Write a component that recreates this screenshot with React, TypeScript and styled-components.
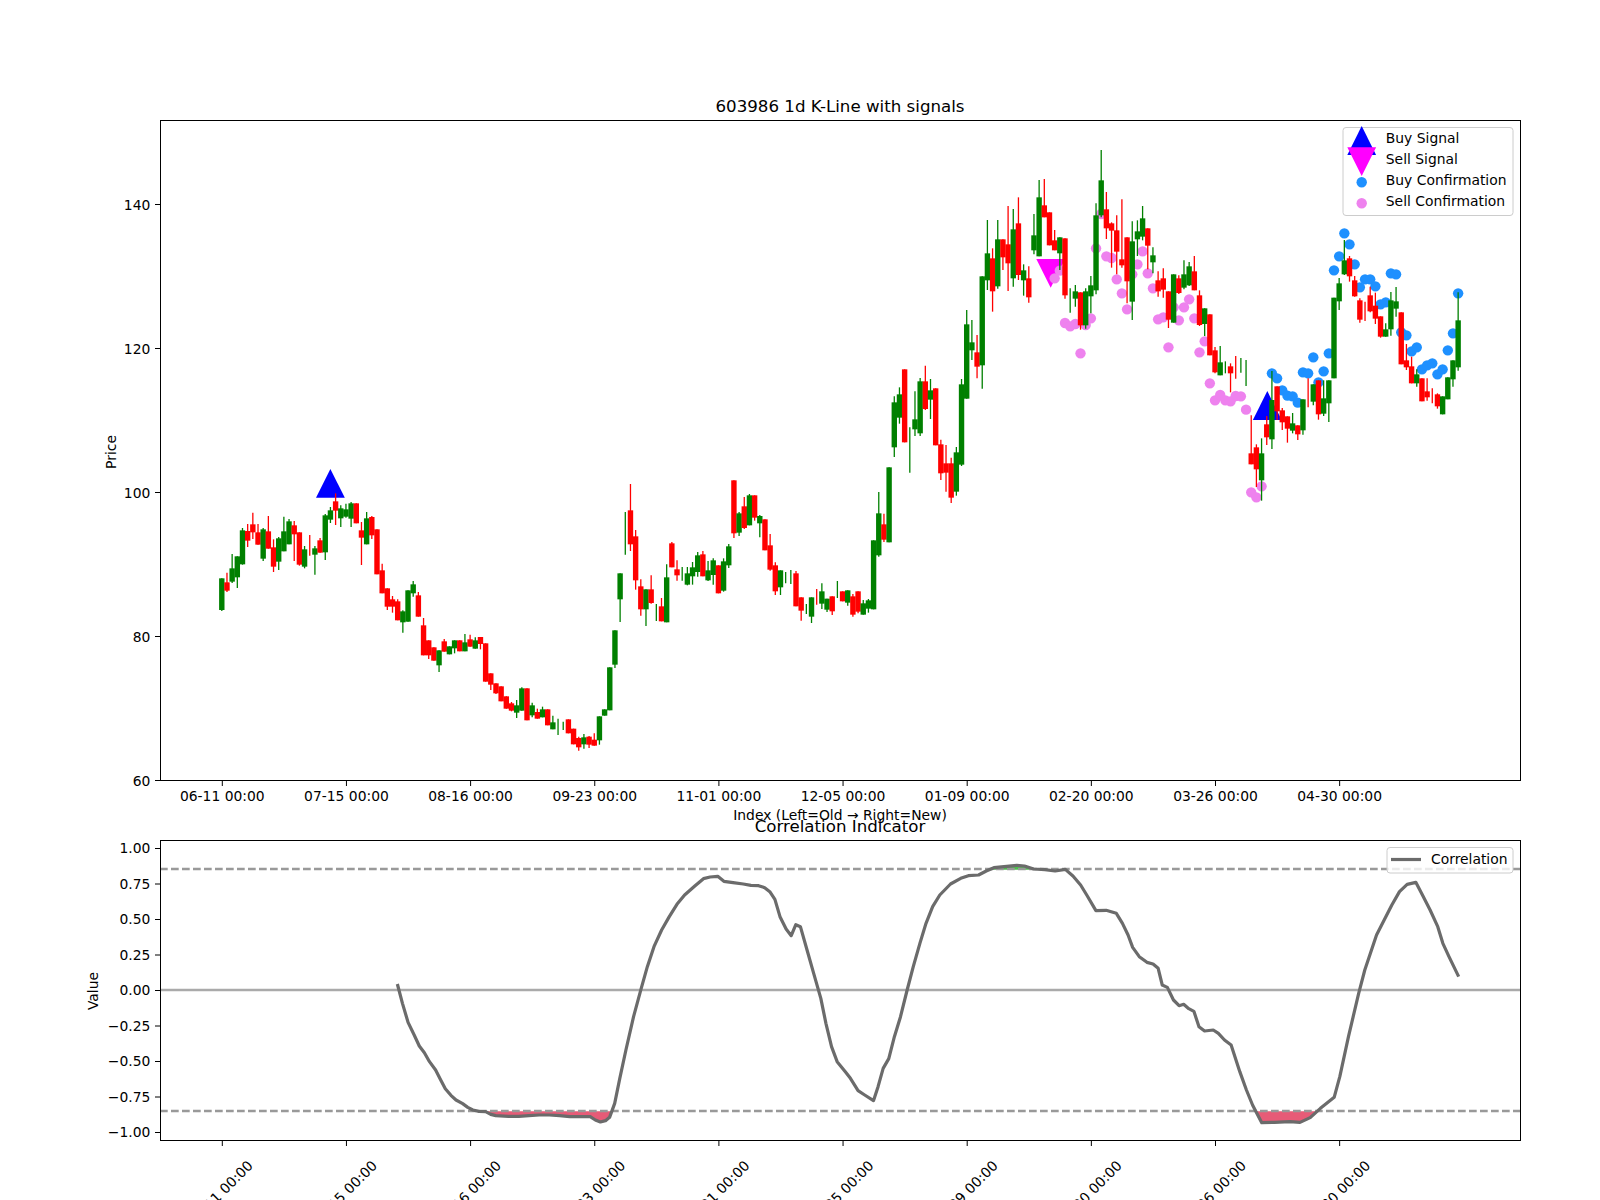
import React from "react";
import styled, { createGlobalStyle } from "styled-components";

const GlobalStyle = createGlobalStyle`
  html, body { margin: 0; padding: 0; background: #fff; }
`;

const Figure = styled.main`
  box-sizing: border-box;
  width: 1600px;
  height: 1200px;
  padding: 120px 80px 0 160px;
  display: flex;
  flex-direction: column;
  gap: 60px;
  overflow: hidden;
  background: #fff;
`;
const ChartBox = styled.section<{ $h: number }>`
  height: ${(p) => p.$h}px;
  flex: none;
`;
const ChartSvg = styled.svg`
  display: block;
  width: 100%;
  height: 100%;
  overflow: visible;
`;
const Label = styled.text<{ $anchor?: string }>`
  font-family: "DejaVu Sans", sans-serif;
  font-size: 13.89px;
  fill: #000;
  text-anchor: ${(p) => p.$anchor || "start"};
`;
const Title = styled.text`
  font-family: "DejaVu Sans", sans-serif;
  font-size: 16.67px;
  fill: #000;
  text-anchor: middle;
`;
const Spine = styled.rect`
  fill: none;
  stroke: #000;
  stroke-width: 1;
`;
const Tick = styled.line`
  stroke: #000;
  stroke-width: 1;
`;
const LegendFrame = styled.rect`
  fill: #fff;
  fill-opacity: 0.8;
  stroke: #ccc;
  stroke-width: 1;
`;
const Wick = styled.line<{ $c: string }>`
  stroke: ${(p) => p.$c};
  stroke-width: 1.3;
`;
const Body = styled.rect<{ $c: string }>`
  fill: ${(p) => p.$c};
`;
const Dot = styled.circle<{ $c: string }>`
  fill: ${(p) => p.$c};
`;
const Marker = styled.polygon<{ $c: string }>`
  fill: ${(p) => p.$c};
`;
const DashLine = styled.line`
  stroke: #999;
  stroke-width: 2.6;
  stroke-dasharray: 7.7 3.3;
`;
const ZeroLine = styled.line`
  stroke: #aaa;
  stroke-width: 2.6;
`;
const CorrLine = styled.polyline`
  fill: none;
  stroke: #6b6b6b;
  stroke-width: 3.2;
  stroke-linejoin: round;
`;
const LegendLine = styled.line`
  stroke: #6b6b6b;
  stroke-width: 3.2;
`;
const FillArea = styled.polygon<{ $c: string }>`
  fill: ${(p) => p.$c};
`;

const g = 0;
const r = 1;
type C = [number, number, number, number, number];

const Z1: C[] = [[g,535,630,535,633],[r,547,572,518,576],[g,505,545,462,549],[g,469,532,469,564],[g,391,493,384,494],[r,393,422,372,441],[r,373,397,338,417],[r,397,434,372,434],[g,388,476,384,483],[r,394,446,348,446],[r,442,500,418,516],[g,415,485,411,510],[g,394,454,350,454],[g,364,433,357,433],[r,376,403,363,483],[r,397,494,397,497],[g,448,500,438,505],[r,0,0,405,467],[g,445,464,438,524],[r,421,458,414,458],[g,346,457,342,480],[g,331,359,321,369],[r,304,332,280,375],[g,325,355,316,381],[g,328,350,311,353],[g,310,356,306,381],[r,310,370,310,370],[r,391,413,366,495],[g,355,433,336,433],[r,351,406,348,417],[r,388,523,388,523],[r,511,580,491,580],[r,565,620,565,630],[r,598,620,588,638],[r,604,661,598,661],[g,634,667,631,698],[g,571,665,571,665],[g,553,580,543,590],[r,586,650,576,650],[r,676,766,654,766],[r,721,766,721,777],[r,742,782,742,782],[g,751,796,751,816],[r,724,755,717,755],[g,739,763,739,763],[g,721,745,721,760],[r,721,754,721,754],[g,727,754,702,754],[r,718,740,704,740],[g,721,746,712,746]];

const Z2: C[] = [[r,561,582,561,598],[r,580,695,580,695],[r,670,704,670,720],[r,700,730,700,732],[r,709,754,709,754],[r,739,776,739,776],[r,760,782,756,784],[g,766,788,750,804],[g,715,782,712,782],[r,715,811,715,811],[g,766,796,758,802],[r,786,806,776,806],[g,778,802,770,802],[r,778,826,778,826],[g,817,838,797,838],[g,0,0,806,855],[g,0,0,815,840],[r,808,850,808,850],[r,836,883,836,883],[r,864,892,860,902],[g,862,883,852,896],[r,860,884,858,894],[r,869,887,850,887],[g,799,871,799,884],[g,778,797,778,797],[g,652,781,652,781],[g,541,644,541,654],[g,370,448,370,516],[g,0,0,186,314],[r,181,283,102,303],[r,259,391,240,419],[r,409,478,388,497],[g,418,478,418,528],[r,418,459,376,461],[g,0,0,462,513],[r,469,514,444,514],[g,382,517,343,517],[r,280,352,276,352],[r,358,376,331,392],[g,0,0,351,392],[g,370,404,351,406],[g,352,379,336,404],[g,316,366,306,380],[r,313,379,303,379],[g,361,391,333,393],[g,331,375,325,404],[r,346,430,346,430],[g,334,422,325,425],[g,289,346,282,354],[r,91,250,91,264],[g,190,248,186,258],[r,169,234,141,237],[g,136,226,132,226],[r,136,203,136,212],[g,198,220,195,262],[r,208,301,208,301],[r,286,359,252,362],[r,346,424,337,435],[g,361,412,361,435],[g,0,0,366,400],[g,0,0,360,402],[r,370,469,363,469]];

const Z3: C[] = [[r,742,782,742,812],[g,0,0,762,792],[g,742,800,742,819],[r,0,0,717,764],[g,724,761,700,777],[g,746,779,746,786],[r,739,784,739,795],[g,0,0,693,744],[r,724,754,724,754],[g,721,758,721,767],[r,739,794,732,800],[r,724,785,724,790],[g,760,794,750,794],[g,751,776,747,788],[g,571,778,571,778],[g,490,616,426,620],[r,523,569,491,576],[g,352,577,352,577],[g,157,292,139,321],[g,133,203,112,221],[r,58,277,58,277],[g,0,0,232,368],[g,208,238,124,258],[g,94,250,84,258],[r,94,177,47,180],[g,121,149,87,207],[r,115,286,115,286],[r,283,370,269,390],[r,340,368,285,425],[r,340,443,323,459],[g,307,425,291,437],[g,103,344,87,348]];

const Z10: C[] = [[g,463,686,420,686],[g,517,541,450,570],[r,547,590,495,625],[g,319,586,319,656],[g,250,331,150,360],[r,265,364,235,425],[g,208,349,150,356]];

const Z4: C[] = [[r,298,352,298,390],[r,313,370,198,453],[g,268,415,207,440],[r,250,405,172,420],[g,391,421,373,467],[r,415,472,379,488],[g,286,331,222,343],[g,172,349,120,349],[r,196,232,117,232],[r,217,316,217,316],[r,301,331,270,331],[g,292,340,292,390],[r,295,466,295,476],[g,0,0,445,518],[g,454,476,435,500],[r,457,556,457,569],[g,454,556,445,566],[g,436,469,408,520],[g,226,451,190,463],[g,121,226,30,232],[r,208,265,156,297],[r,250,272,247,383],[r,271,335,226,403],[r,358,376,178,383],[r,292,424,292,490],[g,304,485,244,540],[g,274,298,241,348],[g,235,290,198,301],[r,265,317,265,388],[g,346,367,322,400],[r,421,454,394,470],[r,415,449,385,473],[r,454,539,454,564],[g,403,548,403,548],[r,415,459,406,462],[g,403,443,361,448],[g,379,436,366,438],[r,394,451,348,451]];

const Z5: C[] = [[r,196,285,181,288],[g,235,282,235,318],[r,253,376,253,376],[r,361,427,351,430],[g,397,436,348,436],[g,0,0,394,430],[r,409,430,400,487],[r,0,0,378,446],[g,0,0,384,428],[g,0,0,390,468],[r,670,703,556,703],[r,652,718,643,771],[g,670,751,625,812],[r,583,622,558,645],[g,510,628,423,657],[r,469,544,469,570],[r,541,577,534,600],[r,559,596,559,638],[g,580,602,549,610],[r,586,613,586,630],[g,508,601,508,614]];

const Z6: C[] = [[r,0,0,775,862],[g,793,845,793,856],[r,781,883,781,899],[g,835,881,781,888],[g,781,850,781,906],[g,533,775,533,775],[g,490,544,474,570],[g,421,463,360,465],[r,415,469,408,485],[r,481,529,468,530],[r,541,599,535,608],[r,0,0,545,603],[r,526,574,500,577],[r,557,596,518,612],[r,589,650,589,653],[g,628,650,610,650],[g,541,628,516,647],[g,544,566,501,590],[r,577,733,577,733],[r,721,742,672,750],[r,739,790,710,790],[g,763,790,748,800],[r,775,844,775,844],[r,814,832,775,842],[r,0,0,805,850],[r,823,859,820,866],[g,829,883,829,883],[g,772,838,772,838],[g,721,778,721,800],[g,601,742,517,752]];

const X = (i: number) => 221.8 + 5.173 * i;
const conv = (rows: C[], off: number) =>
  rows.map(([c, t, b, wt, wb]) => ({
    c: c === g ? "#008000" : "#ff0000",
    t: off + t / 3,
    b: off + b / 3,
    wt: off + wt / 3,
    wb: off + wb / 3,
    body: !(t === 0 && b === 0),
  }));
const candles = [
  ...conv(Z1, 400),
  ...conv(Z2, 450),
  ...conv(Z3, 350),
  ...conv(Z10, 170),
  ...conv(Z4, 140),
  ...conv(Z5, 230),
  ...conv(Z6, 120),
];

const pink: { i: number; y: number }[] = [
  ...[415,392,549,559,552,640,555,535,325,222,349,354,418,460,508,403].map((v, k) => ({ i: 161 + k, y: 140 + v / 3 })),
  ...[103,64,130,175,268,262,352,232,271,232,208,265,367,334,460,511,495,511,514,498,499,539,787,802,769].map((v, k) => ({ i: 177 + k, y: 230 + v / 3 })),
];
const blue: { i: number; y: number }[] = [
  ...[430,445,481,497,499,518,427,430,382,457,424,370].map((v, k) => ({ i: 203 + k, y: 230 + v / 3 })),
  ...[451,409,340,373,433,502,478,478,499,553,547,460,463,637,646,694,682,748,736,730,763,748,691,640,520].map((v, k) => ({ i: 215 + k, y: 120 + v / 3 })),
];

const lineA = [[622,642],[632,700],[643,757],[655,795],[665,828],[675,848],[685,875],[697,900],[707,930],[716,956],[727,976],[737,990],[750,1001],[760,1012],[770,1020],[782,1024],[795,1025],[805,1033],[815,1037],[840,1039],[860,1039],[880,1037],[900,1035],[920,1035],[940,1037],[960,1040],[980,1040],[1000,1040],[1010,1050],[1020,1056],[1030,1052],[1038,1042],[1048,1000],[1058,925],[1070,840],[1085,740],[1100,655],[1112,590],[1125,530],[1140,480],[1155,440],[1170,403],[1185,375],[1205,348],[1222,326],[1235,321],[1250,319],[1262,334],[1280,338],[1300,342],[1315,346],[1330,347],[1342,353],[1352,365],[1362,388],[1372,440],[1384,477],[1394,497],[1403,464],[1412,470],[1425,540],[1438,610],[1452,685],[1462,760],[1473,830],[1484,875],[1500,905],[1510,925],[1525,962],[1538,975]];
const lineB = [[144,992],[153,950],[163,895],[174,866],[185,800],[197,740],[210,660],[222,590],[235,520],[247,460],[260,410],[274,375],[295,342],[315,325],[330,317],[350,315],[365,303],[380,293],[400,290],[425,286],[440,288],[458,297],[480,299],[500,303],[520,298],[535,318],[550,345],[562,375],[580,422],[600,421],[620,430],[632,460],[643,495],[652,532],[665,560],[680,577],[692,582],[702,595],[710,645],[720,652],[732,690],[743,707],[752,703],[762,716],[772,724],[782,770],[793,783],[810,780],[820,790],[832,810],[845,825],[862,905],[875,960],[887,1005],[905,1058],[930,1057],[960,1055],[980,1057],[1000,1043],[1020,1015],[1047,982],[1058,920],[1075,800],[1095,670],[1107,600],[1118,550],[1130,495],[1145,450],[1160,405],[1175,365],[1190,343],[1207,337],[1220,375],[1235,420],[1250,470],[1260,520],[1272,560],[1291,620]];
const linePts: [number, number][] = [
  ...lineA.map(([x, y]) => [80 + x / 1.96, 770 + y / 3] as [number, number]),
  ...lineB.map(([x, y]) => [800 + x / 1.96, 770 + y / 3] as [number, number]),
];

const LOW = 1111.2;
const HIGH = 869.8;
function runs(level: number, beyond: (y: number) => boolean) {
  const out: string[] = [];
  let cur: [number, number][] = [];
  for (let k = 0; k < linePts.length; k++) {
    const p = linePts[k];
    const prev = linePts[k - 1];
    if (beyond(p[1])) {
      if (!cur.length && prev) {
        const f = (level - prev[1]) / (p[1] - prev[1]);
        cur.push([prev[0] + f * (p[0] - prev[0]), level]);
      }
      cur.push(p);
    } else if (cur.length) {
      const f = (level - prev[1]) / (p[1] - prev[1]);
      cur.push([prev[0] + f * (p[0] - prev[0]), level]);
      out.push(cur.map((q) => q.join(",")).join(" "));
      cur = [];
    }
  }
  return out;
}
const redFill = runs(LOW, (y) => y > LOW);
const greenFill = runs(HIGH, (y) => y < HIGH);

const dates = ["06-11", "07-15", "08-16", "09-23", "11-01", "12-05", "01-09", "02-20", "03-26", "04-30"];
const tickX = dates.map((_, k) => 222.3 + 124.15 * k);
const priceTicks = [60, 80, 100, 120, 140];
const PY = (p: number) => 636.3 - (p - 80) * 7.2;
const corrTicks = ["1.00", "0.75", "0.50", "0.25", "0.00", "−0.25", "−0.50", "−0.75", "−1.00"];

const triUp = (cx: number, tip: number, base: number) =>
  `${cx},${tip} ${cx - 14.4},${base} ${cx + 14.4},${base}`;
const triDown = (cx: number, top: number, tip: number) =>
  `${cx - 14.4},${top} ${cx + 14.4},${top} ${cx},${tip}`;

export default function App() {
  return (
    <Figure>
      <GlobalStyle />
      <ChartBox $h={660}>
        <ChartSvg viewBox="160 120 1360 660">
          <Marker $c="#0000ff" points={triUp(330.4, 469, 497.7)} />
          <Marker $c="#0000ff" points={triUp(1267.3, 391, 420)} />
          <Marker $c="#ff00ff" points={triDown(1050.7, 259, 287.7)} />
          {pink.map((d) => (
            <Dot key={d.i} $c="#ee82ee" cx={X(d.i)} cy={d.y} r={5.2} />
          ))}
          {blue.map((d) => (
            <Dot key={d.i} $c="#1e90ff" cx={X(d.i)} cy={d.y} r={5.2} />
          ))}
          {candles.map((c, i) => (
            <g key={i}>
              <Wick $c={c.c} x1={X(i)} x2={X(i)} y1={c.wt} y2={c.wb} />
              {c.body && <Body $c={c.c} x={X(i) - 2.7} width={5.4} y={c.t} height={c.b - c.t} />}
            </g>
          ))}
          <Spine x={160.5} y={120.5} width={1360} height={660} />
          <Title x={840} y={112}>603986 1d K-Line with signals</Title>
          {priceTicks.map((p) => (
            <g key={p}>
              <Tick x1={155} x2={160} y1={Math.round(PY(p)) + 0.5} y2={Math.round(PY(p)) + 0.5} />
              <Label $anchor="end" x={150.3} y={PY(p) + 5.5}>{p}</Label>
            </g>
          ))}
          {tickX.map((x, k) => (
            <g key={k}>
              <Tick x1={x} x2={x} y1={781} y2={786} />
              <Label $anchor="middle" x={x} y={801}>{dates[k]} 00:00</Label>
            </g>
          ))}
          <Label $anchor="middle" x={840} y={820}>Index (Left=Old → Right=New)</Label>
          <Label $anchor="middle" transform="translate(116 452) rotate(-90)">Price</Label>

          <LegendFrame x={1343} y={127.5} width={170} height={88} rx={3} />
          <Marker $c="#0000ff" points={triUp(1361.7, 126, 155)} />
          <Marker $c="#ff00ff" points={triDown(1361.7, 147.3, 176)} />
          <Dot $c="#1e90ff" cx={1361.7} cy={182.3} r={5.2} />
          <Dot $c="#ee82ee" cx={1361.7} cy={203.3} r={5.2} />
          <Label x={1385.8} y={143}>Buy Signal</Label>
          <Label x={1385.8} y={164}>Sell Signal</Label>
          <Label x={1385.8} y={185}>Buy Confirmation</Label>
          <Label x={1385.8} y={206}>Sell Confirmation</Label>
        </ChartSvg>
      </ChartBox>
      <ChartBox $h={300}>
        <ChartSvg viewBox="160 840 1360 300">
          <ZeroLine x1={160} x2={1520} y1={990} y2={990} />
          {redFill.map((pts, k) => (
            <FillArea key={k} $c="#e75b77" points={pts} />
          ))}
          {greenFill.map((pts, k) => (
            <FillArea key={k} $c="#4cc04c" points={pts} />
          ))}
          <DashLine x1={160} x2={1520} y1={869} y2={869} />
          <DashLine x1={160} x2={1520} y1={1111} y2={1111} />
          <CorrLine points={linePts.map((p) => p.join(",")).join(" ")} />
          <Spine x={160.5} y={840.5} width={1360} height={300} />
          <Title x={840} y={832}>Correlation Indicator</Title>
          {corrTicks.map((t, k) => (
            <g key={t}>
              <Tick x1={155} x2={160} y1={848.5 + 35.5 * k} y2={848.5 + 35.5 * k} />
              <Label $anchor="end" x={150.3} y={853 + 35.5 * k}>{t}</Label>
            </g>
          ))}
          {tickX.map((x, k) => (
            <g key={k}>
              <Tick x1={x} x2={x} y1={1141} y2={1146} />
              <Label $anchor="middle" transform={`translate(${x - 2} 1193) rotate(-45)`} y={5}>{dates[k]} 00:00</Label>
            </g>
          ))}
          <Label $anchor="middle" transform="translate(98 991) rotate(-90)">Value</Label>

          <LegendFrame x={1387} y={847.5} width={126} height={25.5} rx={3} />
          <LegendLine x1={1391} x2={1421} y1={859.5} y2={859.5} />
          <Label x={1431} y={864}>Correlation</Label>
        </ChartSvg>
      </ChartBox>
    </Figure>
  );
}
